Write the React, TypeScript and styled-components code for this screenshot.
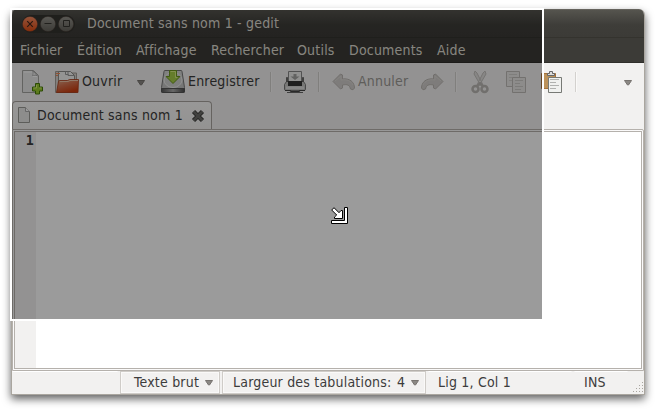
import React from 'react';
import styled, { createGlobalStyle } from 'styled-components';

const Global = createGlobalStyle`
  * { box-sizing: border-box; }
  html, body, #root { margin: 0; width: 655px; height: 409px; overflow: hidden; background: #fff; }
  body { font: 14px/16px "DejaVu Sans Condensed", "DejaVu Sans", sans-serif; letter-spacing: .2px; color: #3c3c3c; }
  svg { display: block; flex: none; shape-rendering: auto; }
`;

const Desktop = styled.main`
  position: relative;
  width: 655px;
  height: 409px;
  padding: 9px 10px 14px 11px;
`;
const Window = styled.section`
  display: flex;
  flex-direction: column;
  width: 634px;
  height: 386px;
  border: 1px solid #aaa69f;
  border-top: 0;
  border-radius: 6px 6px 0 0;
  overflow: hidden;
  background: #f2f1f0;
  box-shadow: 0 4px 9px rgba(0, 0, 0, .62);
`;
const TitleBar = styled.header`
  display: flex;
  align-items: center;
  flex: none;
  height: 29px;
  margin: 0 -1px;
  padding: 0 0 0 11px;
  border-top: 1px solid #65635d;
  border-bottom: 1px solid #34332e;
  background: linear-gradient(#55544e, #3e3d39 55%, #3c3b37);
  color: #dfdbd2;
`;
const Controls = styled.div`
  display: flex;
  align-items: center;
  gap: 2px;
  height: 18px;
  width: 53px;
  border-radius: 9px;
  background: #34332f;
`;
const Title = styled.div`
  margin-left: 12px;
  padding-bottom: 2px;
  white-space: pre;
`;
const MenuBar = styled.nav`
  display: flex;
  align-items: center;
  flex: none;
  height: 25px;
  margin: 0 -1px;
  padding: 0 0 1px 2px;
  border-bottom: 1px solid #302f2b;
  background: #3c3b37;
  color: #dfdbd2;
`;
const MenuItem = styled.span<{ $w: number }>`
  width: ${p => p.$w}px;
  padding-left: 7px;
  white-space: pre;
`;
const ToolBar = styled.div`
  display: flex;
  align-items: center;
  flex: none;
  height: 38px;
  padding-left: 8px;
`;
const Slot = styled.div<{ $w: number }>`
  flex: none;
  width: ${p => p.$w}px;
  white-space: pre;
`;
const ArrowSlot = styled.div<{ $w: number }>`
  flex: none;
  width: ${p => p.$w}px;
  padding-top: 2px;
`;
const Label = styled.span<{ $w: number; $muted?: boolean }>`
  flex: none;
  width: ${p => p.$w}px;
  padding-bottom: 2px;
  white-space: pre;
  color: ${p => (p.$muted ? '#9c9995' : '#3c3c3c')};
`;
const Divider = styled.i`
  flex: none;
  width: 2px;
  height: 20px;
  margin-bottom: 1px;
  border-left: 1px solid #d3d1ce;
  border-right: 1px solid #faf9f8;
`;
const Tabs = styled.div`
  display: flex;
  flex: none;
  height: 29px;
  margin-bottom: -1px;
`;
const Tab = styled.div`
  display: flex;
  align-items: center;
  width: 200px;
  padding: 0 0 1px 4px;
  border: 1px solid #a8a49f;
  border-bottom: 0;
  border-radius: 4px 4px 0 0;
  background: linear-gradient(#faf9f8, #f2f1f0);
`;
const Frame = styled.div`
  display: flex;
  flex: 1;
  border: 1px solid #b5b1ac;
  border-radius: 0 2px 0 0;
  padding: 1px;
  background: #fbfafa;
`;
const Editor = styled.div`
  display: flex;
  flex: 1;
  border: 1px solid #b5b1ac;
  background: #fff;
`;
const Gutter = styled.div`
  width: 21px;
  padding: 1px 2px 0 0;
  background: #f2f1f0;
  text-align: right;
  font: bold 13.33px/16px "DejaVu Sans Mono", monospace;
`;
const StatusBar = styled.footer`
  display: flex;
  flex: none;
  height: 23px;
  justify-content: space-between;
`;
const StatusCell = styled.div<{ $w: number; $left: number; $boxed?: boolean }>`
  display: flex;
  align-items: center;
  flex: none;
  width: ${p => p.$w}px;
  padding: 0 0 1px ${p => p.$left}px;
  margin-right: 2px;
  white-space: pre;
  border: 1px solid ${p => (p.$boxed ? '#cfccc8' : 'transparent')};
  border-top-color: ${p => (p.$boxed ? '#cfccc8' : '#fff')};
  box-shadow: ${p => (p.$boxed ? 'inset 0 0 0 1px #faf9f8' : 'none')};
`;
const Cells = styled.div`
  display: flex;
`;
const Grip = styled.div`
  align-self: flex-end;
`;
const Selection = styled.div`
  position: absolute;
  left: 10px;
  top: 8px;
  width: 534px;
  height: 313px;
  border: 2px solid #fff;
  background: rgba(0, 0, 0, .392);
  background-clip: padding-box;
`;
const Cursor = styled.div`
  position: absolute;
  left: 331px;
  top: 207px;
`;

const Round = ({ kind }: { kind: 'close' | 'min' | 'max' }) => (
  <svg width="16" height="16" viewBox="0 0 16 16" fill="none">
    <defs>
      <linearGradient id={'r' + kind} x2="0" y2="1">
        <stop stopColor={kind === 'close' ? '#f58a60' : '#93918a'} />
        <stop offset="1" stopColor={kind === 'close' ? '#dc4b13' : '#64625b'} />
      </linearGradient>
    </defs>
    <circle cx="8" cy="8" r="7.6" fill={`url(#r${kind})`} stroke="#4a3b32" strokeWidth=".4" />
    {kind === 'close' && <path d="M5.2 5.2l5.6 5.6m0-5.6l-5.6 5.6" stroke="#42271c" strokeWidth="1.2" />}
    {kind === 'min' && <path d="M4.5 7.5h7" stroke="#373631" />}
    {kind === 'max' && <path d="M5.5 4.500h6v6h-6z" stroke="#373631" />}
  </svg>
);

const Arrow = () => (
  <svg width="8" height="6" viewBox="0 0 8 6">
    <path d="M.5.5h7L4.5 5h-1z" fill="#8b8884" stroke="#77736f" />
  </svg>
);

const NewDoc = () => (
  <svg width="24" height="26" viewBox="0 0 24 26">
    <path d="M2.500 1.500h11l5 5v17h-16z" fill="#e9e9e8" stroke="#a4a4a0" />
    <path d="M4 3h9v4.500h4.500" fill="none" stroke="#fff" />
    <path d="M12.500 1.500c1 2 .5 3.500 0 5 2-.5 3.500-.5 5 .5z" fill="#fff" stroke="#999" strokeWidth=".8" />
    <path d="M15.500 14.500h4v3.500h3v4h-3v3h-4v-3h-3v-4h3z" fill="#9acb30" stroke="#477c08" />
    <path d="M16.500 16v3h-3m6 0h2" stroke="#d3ef75" fill="none" />
  </svg>
);

const OpenDoc = () => (
  <svg width="26" height="26" viewBox="0 0 26 26">
    <defs>
      <linearGradient id="folder" x2=".5" y2="1"><stop stopColor="#e2b08d" /><stop offset=".45" stopColor="#d67350" /><stop offset="1" stopColor="#cc3f12" /></linearGradient>
    </defs>
    <path d="M1.500 2.500H9V4h13.500V23.500h-21z" fill="#d7d3ce" stroke="#a39c96" />
    <path d="M4.500 2.500h12l4 4V23h-16z" fill="#f3f3f2" stroke="#8e8e8b" />
    <path d="M14 2.500v4h6.500m-9-4v3h3" fill="none" stroke="#999" />
    <path d="M2 4.500h4M2 6.500h2" stroke="#ed8656" />
    <path d="M4.500 12.500q0-1 1-1h8l2-1h9l-.5 13H2.500z" fill="url(#folder)" stroke="#aa3a18" strokeWidth=".8" />
    <path d="M6 12.500h8l2-1h8" fill="none" stroke="#edc4a9" />
  </svg>
);

const Save = () => (
  <svg width="26" height="26" viewBox="0 0 26 26">
    <defs>
      <linearGradient id="disk" x2="0" y2="1"><stop stopColor="#d6d7d5" /><stop offset="1" stopColor="#bbb" /></linearGradient>
      <linearGradient id="diskFront"><stop stopColor="#555" /><stop offset=".5" stopColor="#aaa" /><stop offset="1" stopColor="#4b4b4b" /></linearGradient>
    </defs>
    <path d="M4 2.500q0-1 1-1h16q1 0 1 1l2.500 16v4q0 1-1 1h-21q-1 0-1-1v-4z" fill="url(#disk)" stroke="#777" />
    <ellipse cx="13" cy="11" rx="9" ry="7.500" fill="#d0d1cf" stroke="#eee" />
    <path d="M1.500 19.500h23v3q0 1-1 1h-21q-1 0-1-1z" fill="url(#diskFront)" stroke="#555" />
    <path d="M9.500 1.500h7v6h3.500L13 14.500 6 7.500h3.500z" fill="#a6ce47" stroke="#6b941f" />
    <path d="M10.500 2.500h5v6h2" fill="none" stroke="#d7ef83" />
  </svg>
);

const Print = () => (
  <svg width="24" height="26" viewBox="0 0 24 26">
    <path d="M5.500 12V2.500h13V12" fill="#ededec" stroke="#888" />
    <path d="M10.500 5h3v2.500h3L12 11 7.500 7.500h3z" fill="#a2a2a0" />
    <path d="M3.500 12.500h17l2 3v5q0 1-2 1h-17q-2 0-2-1v-5z" fill="#c4c4c2" stroke="#777" />
    <path d="M3.500 8.500h1v4h-1zm16 0h1v4h-1z" fill="#444" stroke="#555" strokeWidth=".7" />
    <path d="M5 12h14v5H5z" fill="#343434" />
    <path d="M3 17.500h18v2.500H3z" fill="#ddd" />
    <path d="M2 21.500h5l1 1h8l1-1h5" fill="none" stroke="#444" strokeWidth="1.200" />
    <path d="M4 23.500h16" stroke="#666" />
  </svg>
);

const Undo = () => (
  <svg width="24" height="20" viewBox="0 0 24 20">
    <path d="M1 9.500L8.500 2l2 1v4c7-1 12 3 12 9q-1 3-4 1c-1-4-3-5-8-4v3l-2 1z" fill="#d0cdca" stroke="#bab6b2" strokeLinejoin="round" />
    <path d="M3 9l6-5v4c6-1 10 1 12 5" fill="none" stroke="#dbd8d5" />
  </svg>
);
const Mirror = styled.div`transform: scaleX(-1); width: 24px;`;

const Cut = () => (
  <svg width="20" height="26" viewBox="0 0 20 26" fill="none">
    <path d="M4 2l2 2 6 12-2 1L3 5zM14 2l-2 2-6 12 2 1 7-12z" fill="#dedddb" stroke="#c2bfbc" />
    <circle cx="4.500" cy="20" r="3" stroke="#bab7b3" strokeWidth="2.500" />
    <circle cx="13.500" cy="20" r="3" stroke="#bab7b3" strokeWidth="2.500" />
    <path d="M6 17l3-3 3 3" stroke="#bab7b3" strokeWidth="2" />
  </svg>
);
const Copy = () => (
  <svg width="22" height="26" viewBox="0 0 22 26" fill="none" stroke="#bebbb7">
    <path d="M1.500 2.500h13v15h-13z" fill="#e9e7e5" />
    <path d="M4 5.500h8M4 8.500h8M4 11.500h8" stroke="#d1cfcc" />
    <path d="M7.500 8.500h13v15h-13z" fill="#e9e7e5" />
    <path d="M10 11.500h8M10 14.500h5M10 17.500h8M10 20.500h6" stroke="#cdcac7" />
  </svg>
);
const Paste = () => (
  <svg width="23" height="26" viewBox="0 0 23 26" fill="none">
    <path d="M1.500 4.500h14v15h-14z" fill="#bc925a" stroke="#a5713a" />
    <path d="M7.500 6.500v-2h2v-2h3v2h2v2z" fill="#ddd" stroke="#666" />
    <path d="M8.500 8.500h13v15h-13z" fill="#f0f1ef" stroke="#777975" />
    <path d="M10 10.500h9M10 13.500h6M10 16.500h9M10 19.500h6" stroke="#b0b1af" />
  </svg>
);

const TabLabel = styled.div`
  flex: none;
  width: 154px;
  padding-bottom: 2px;
  white-space: pre;
`;

export default function App() {
  const menus: [string, number][] = [
    ['Fichier', 57], ['Édition', 59], ['Affichage', 75], ['Rechercher', 86],
    ['Outils', 52], ['Documents', 88], ['Aide', 43],
  ];
  return (
    <>
      <Global />
      <Desktop>
        <Window>
          <TitleBar>
            <Controls><Round kind="close" /><Round kind="min" /><Round kind="max" /></Controls>
            <Title>Document sans nom 1 - gedit</Title>
          </TitleBar>
          <MenuBar>
            {menus.map(([name, width]) => <MenuItem key={name} $w={width}>{name}</MenuItem>)}
          </MenuBar>
          <ToolBar>
            <Slot $w={34}><NewDoc /></Slot>
            <Slot $w={28}><OpenDoc /></Slot>
            <Label $w={55}>Ouvrir</Label>
            <ArrowSlot $w={23}><Arrow /></ArrowSlot>
            <Slot $w={28}><Save /></Slot>
            <Label $w={82}>Enregistrer</Label>
            <Divider />
            <Slot $w={11} />
            <Slot $w={35}><Print /></Slot>
            <Divider />
            <Slot $w={12} />
            <Slot $w={26}><Undo /></Slot>
            <Label $w={62} $muted>Annuler</Label>
            <Slot $w={35}><Mirror><Undo /></Mirror></Slot>
            <Divider />
            <Slot $w={14} />
            <Slot $w={34}><Cut /></Slot>
            <Slot $w={35}><Copy /></Slot>
            <Slot $w={35}><Paste /></Slot>
            <Divider />
            <Slot $w={47} />
            <ArrowSlot $w={8}><Arrow /></ArrowSlot>
          </ToolBar>
          <Tabs>
            <Tab>
              <Slot $w={20}>
                <svg width="14" height="17" viewBox="0 0 14 17">
                  <path d="M1.500.5h7l4 4v11h-11z" fill="#e8e8e7" stroke="#999995" />
                  <path d="M8.500.5v4h4" fill="#fff" stroke="#aaa" />
                </svg>
              </Slot>
              <TabLabel>Document sans nom 1</TabLabel>
              <svg width="14" height="14" viewBox="0 0 14 14">
                <path d="M2.500 2.500l9 9m0-9l-9 9" stroke="#42423f" strokeWidth="4.500" />
                <path d="M2.700 2.700l8.600 8.600m0-8.600l-8.600 8.600" stroke="#6c6c69" strokeWidth="2.500" />
              </svg>
            </Tab>
          </Tabs>
          <Frame><Editor><Gutter>1</Gutter></Editor></Frame>
          <StatusBar>
            <Cells>
              <StatusCell $w={106} $left={0} />
              <StatusCell $w={100} $left={13} $boxed><Slot $w={71}>Texte brut</Slot><ArrowSlot $w={8}><Arrow /></ArrowSlot></StatusCell>
              <StatusCell $w={204} $left={10} $boxed><Slot $w={164}>Largeur des tabulations:</Slot><Slot $w={14}>4</Slot><ArrowSlot $w={8}><Arrow /></ArrowSlot></StatusCell>
              <StatusCell $w={144} $left={9}>Lig 1, Col 1</StatusCell>
              <StatusCell $w={54} $left={9}>INS</StatusCell>
            </Cells>
            <Grip>
              <svg width="12" height="12" viewBox="0 0 12 12" fill="#aaa6a0">
                {[[10, 0], [7, 3], [10, 3], [4, 6], [7, 6], [10, 6], [1, 9], [4, 9], [7, 9], [10, 9]].map(([x, y]) => <rect key={`${x}-${y}`} x={x} y={y} width="1" height="1" />)}
              </svg>
            </Grip>
          </StatusBar>
        </Window>
        <Selection />
        <Cursor>
          <svg width="18" height="18" viewBox="0 0 18 18">
            <path d="M13.500.5h3v16H.500v-3h13z" fill="#fff" stroke="#000" />
            <path d="M.7 3L3 .7l5 5L10 3.500h1.500v8h-8V10L5.700 8z" fill="#fff" stroke="#000" />
          </svg>
        </Cursor>
      </Desktop>
    </>
  );
}
